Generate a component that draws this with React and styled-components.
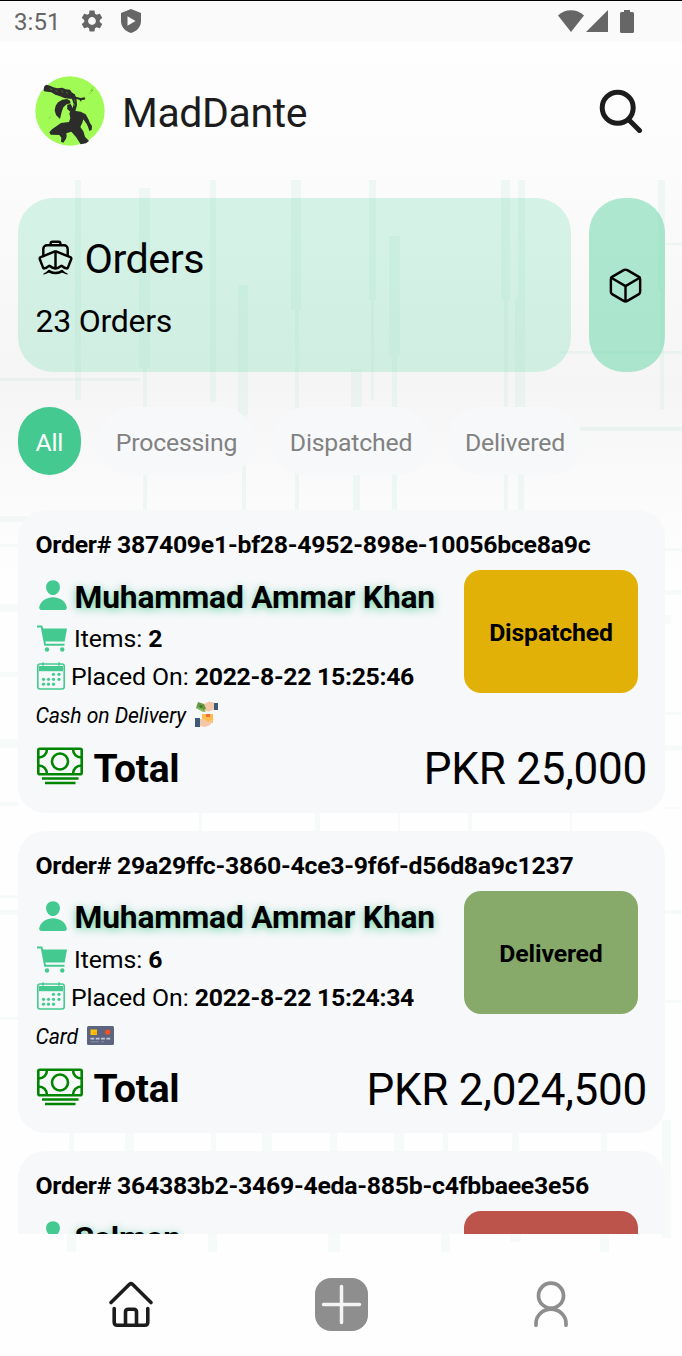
import React from "react";
import styled, { createGlobalStyle } from "styled-components";
import { IoBoatOutline, IoCubeOutline, IoPerson } from "react-icons/io5";
import { MdSettings } from "react-icons/md";

const GlobalStyle = createGlobalStyle`
  * { box-sizing: border-box; }
  body { margin: 0; font-family: Roboto, "Liberation Sans", sans-serif; color: #000; }
  svg { display: block; flex: none; }
`;

const Screen = styled.div`
  position: relative;
  display: flex;
  flex-direction: column;
  width: 682px;
  height: 1356px;
  overflow: hidden;
  background: linear-gradient(#fefefe 42px, #fbfbfb 190px, #f5f5f5 385px, #fafafa 480px, #fefefe 580px);
`;
const Backdrop = styled.svg`
  position: absolute;
  left: 0;
  top: 0;
`;
const StatusBar = styled.div`
  position: relative;
  display: flex;
  align-items: center;
  height: 42px;
  padding: 0 48px 1px 14px;
  border-top: 1px solid #000;
  background: #fafafa;
  color: #666;
`;
const Clock = styled.span`
  width: 65px;
  padding-top: 1px;
  font-size: 24px;
  letter-spacing: 0.1px;
`;
const StatusIcons = styled.div`
  display: flex;
  align-items: center;
  gap: ${(p) => p.$gap}px;
  margin-left: ${(p) => (p.$end ? "auto" : "0")};
`;
const BatterySlot = styled.span`
  padding-left: 10px;
`;
const Header = styled.header`
  position: relative;
  display: flex;
  align-items: center;
  height: 138px;
  padding: 0 39px 0 34.5px;
`;
const UserName = styled.h1`
  flex: 1;
  margin: 3px 0 0 17.5px;
  font-size: 41px;
  font-weight: 400;
  letter-spacing: -0.4px;
  line-height: 48px;
  color: #1c1c1c;
`;
const Summary = styled.section`
  position: relative;
  display: flex;
  gap: 17.5px;
  height: 174px;
  margin: 18px 17px 0 18px;
`;
const OrdersPanel = styled.div`
  flex: 1;
  padding: 32px 17.5px;
  border-radius: 35px;
  background: rgba(66, 211, 152, 0.2);
`;
const PanelTitle = styled.h2`
  display: flex;
  align-items: center;
  gap: 10px;
  height: 58px;
  margin: 0;
  font-size: 41.3px;
  font-weight: 400;
  letter-spacing: -0.5px;

  svg { margin-bottom: 4px; }
`;
const PanelCount = styled.div`
  height: 66px;
  font-size: 32px;
  letter-spacing: -0.25px;
  line-height: 66px;
`;
const ProductsPanel = styled.div`
  display: flex;
  align-items: center;
  justify-content: center;
  width: 76.5px;
  padding-right: 3px;
  border-radius: 35px;
  background: rgba(66, 205, 148, 0.41);
`;
const Filters = styled.nav`
  position: relative;
  display: flex;
  gap: 17.7px;
  height: 68px;
  margin: 35px 0 0 18px;
`;
const Chip = styled.button`
  padding: 3px 17.5px 0;
  border: 0;
  border-radius: 35px;
  background: ${(p) => (p.$active ? "#44c990" : "#f7f8fa")};
  color: ${(p) => (p.$active ? "#fff" : "#818181")};
  font: 400 24.8px Roboto, sans-serif;
  letter-spacing: -0.2px;
`;
const OrderList = styled.main`
  position: relative;
  display: flex;
  flex-direction: column;
  gap: 18.2px;
  height: 724px;
  margin-top: 35px;
  padding: 0 17px 0 18px;
  overflow: hidden;
`;
const Card = styled.article`
  flex: none;
  height: 302.5px;
  padding: 19px 18px 0 17.5px;
  border-radius: 27px;
  background: #f7f8fa;
`;
const OrderId = styled.h3`
  height: 41px;
  margin: 0;
  font-size: 24.8px;
  font-weight: 700;
  letter-spacing: -0.25px;
  line-height: 32px;
  white-space: nowrap;
`;
const CardBody = styled.div`
  display: flex;
  justify-content: space-between;
  height: 130px;
  padding-right: 9px;
`;
const Row = styled.div`
  display: flex;
  align-items: center;
  gap: ${(p) => p.$gap}px;
  height: ${(p) => p.$height}px;
  padding-left: ${(p) => p.$indent || 0}px;
  font-size: 24.8px;
  letter-spacing: -0.05px;
  white-space: nowrap;

  svg { margin-bottom: ${(p) => p.$lift || 0}px; }
  b { letter-spacing: -0.3px; }
`;
const Customer = styled.strong`
  font-size: 31.8px;
  letter-spacing: -0.17px;
  text-shadow: 0 2px 8px rgba(68, 201, 144, 0.8);
`;
const Badge = styled.div`
  display: flex;
  align-items: center;
  justify-content: center;
  width: 174px;
  height: 123px;
  padding-top: 2px;
  border-radius: 17px;
  background: ${(p) => p.$color};
  font-size: 24.8px;
  font-weight: 700;
  letter-spacing: -0.15px;
`;
const Payment = styled.div`
  display: flex;
  align-items: center;
  gap: 9px;
  height: 31px;
  font-size: 21.2px;
  font-style: italic;
  letter-spacing: -0.1px;

  svg { margin-bottom: 2px; }
`;
const TotalRow = styled.div`
  display: flex;
  align-items: center;
  height: 75px;

  svg { margin: 0 0 5px 1px; }
`;
const TotalLabel = styled.strong`
  flex: 1;
  margin-left: 11px;
  font-size: 39px;
  letter-spacing: -0.3px;
`;
const Amount = styled.span`
  padding-top: 1px;
  font-size: 44px;
  letter-spacing: -0.25px;
`;
const TabBar = styled.footer`
  position: relative;
  display: grid;
  grid-template-columns: repeat(3, 210px);
  justify-content: center;
  justify-items: center;
  align-items: center;
  height: 122px;
`;
const Tab = styled.div`
  display: flex;
  align-items: center;
  height: 86px;
  margin-top: 18px;
`;

/* x, y, width, height of every faint stripe behind the content */
const STRIPES = [
  [75, 180, 6, 220], [139, 188, 11, 180], [143, 368, 4, 142], [210, 180, 6, 222],
  [291, 180, 10, 130], [295, 310, 4, 200], [238, 285, 10, 130], [242, 415, 4, 95],
  [369, 180, 7, 120], [371, 300, 3, 100], [389, 236, 11, 120], [392, 356, 5, 154],
  [351, 369, 11, 60], [353, 429, 7, 81], [501, 180, 9, 120], [504, 300, 4, 210],
  [518, 180, 7, 117], [515, 297, 10, 130], [518, 427, 6, 83], [658, 180, 7, 110], [660, 290, 4, 120],
  [0, 378, 140, 3], [560, 351, 122, 3], [580, 427, 102, 4], [665, 243, 17, 2],
  [0, 516, 30, 6], [0, 544, 18, 3], [0, 604, 18, 8], [0, 672, 18, 5], [0, 739, 18, 9], [0, 802, 18, 4],
  [665, 548, 17, 3], [665, 590, 17, 5], [665, 615, 6, 9], [665, 712, 17, 3], [665, 745, 17, 6], [665, 807, 17, 2],
  [199, 812, 3, 19], [315, 812, 5, 19], [398, 812, 2, 19], [468, 812, 4, 19], [570, 812, 2, 19],
  [0, 895, 18, 3], [0, 910, 18, 5], [0, 1017, 18, 3], [665, 910, 17, 4], [665, 1000, 17, 3],
  [69, 1133, 5, 18], [125, 1133, 9, 18], [211, 1133, 5, 18], [262, 1133, 10, 18], [330, 1133, 7, 18],
  [394, 1133, 10, 18], [443, 1133, 5, 18], [512, 1133, 7, 18], [601, 1133, 6, 18], [662, 1120, 9, 118],
  [67, 1234, 9, 18], [208, 1234, 9, 18], [328, 1234, 12, 18], [441, 1234, 9, 18], [510, 1234, 11, 8], [600, 1234, 9, 18],
];

const Stripes = () => (
  <Backdrop width="682" height="1356">
    {STRIPES.map(([x, y, w, h], i) => (
      <rect key={i} x={x} y={y} width={w} height={h} fill="#8fd9bb" opacity={y < 500 ? 0.11 : 0.07} />
    ))}
  </Backdrop>
);

const ShieldIcon = () => (
  <svg width="20" height="24" viewBox="0 0 20 24">
    <path fill="#666" fillRule="evenodd" d="M10 0 20 4v8c0 6-4.500 10.500-10 12C4.500 22.500 0 18 0 12V4zM6.500 7.200v9.600l8-4.800z" />
  </svg>
);
const WifiIcon = () => (
  <svg width="26" height="22" viewBox="0 0 26 22">
    <path fill="#666" d="M13 22 0 5.500C7-1.600 19-1.600 26 5.500z" />
  </svg>
);
const SignalIcon = () => (
  <svg width="22" height="22" viewBox="0 0 22 22">
    <path fill="#666" d="M22 0v22H0z" />
  </svg>
);
const BatteryIcon = () => (
  <svg width="14" height="23" viewBox="0 0 14 23">
    <path fill="#666" d="M4 0h6v2h2.500Q14 2 14 3.500v18Q14 23 12.500 23h-11Q0 23 0 21.500v-18Q0 2 1.500 2H4z" />
  </svg>
);
const Avatar = () => (
  <svg width="70" height="70" viewBox="13 17 210 210">
    <circle cx="118" cy="122" r="104" fill="#a1fb55" />
    <g fill="#2c2c2a">
      <path d="m41 48 6-5 11 3 10 5 12 3 15-2 10 5 13 1 5 8 10 7 2 6 15 4 11-2 3 3-2 4-9 1-2 5-5-6-12-3-18 0-15-2-15-6-12-4-12-7-13-2-9-1-1-6z" />
      <path d="m122 68 10 4 6 18 1 15-6 20-9-4 5-20-6-18z" />
      <path d="m88 146-12-12-4-14 3-14 7-10 13-8 14-2 9 5 2 8-12 3-10 9-5 14z" />
      <path d="m110 103 10-2 5 10 5 10-3 9-11-8-7-7z" />
      <path d="m122 120 28 4 15 8 8 14 5 12 6 9-1 12-7 3-4-13-4-8-10-14-3 10-6 13 9 13 5 16 12 13-9 7-16 3-14-22-14-16-15 5 1 8-2 8-8 12-7-3 1-12-6-8-26-1-4-7 8-9 27-19 24-3 4-12-3-14z" />
    </g>
    <path d="m57 54 7 4m10 2 7 4m11-4 5 7m9-2 6 5m19 18 2 7m0 5-2 7m-19 3-6 7" stroke="#a1fb55" strokeWidth="1.500" opacity=".6" fill="none" />
    <path d="m188 51-8 10 7-2-11 12M60 138l-6 8" stroke="#579536" strokeWidth="1.300" fill="none" />
  </svg>
);
const SearchIcon = () => (
  <svg width="44" height="44" viewBox="0 0 44 44" fill="none" stroke="#1c1c1c" strokeWidth="5" strokeLinecap="round">
    <circle cx="18.700" cy="18.700" r="15.500" />
    <path d="m30 31 10.500 10.500" />
  </svg>
);
const CartIcon = () => (
  <svg width="30" height="27" viewBox="0 0 30 27" fill="#44c990">
    <path d="M0 .5h5.200l1 3H30l-2.300 13H8.200l.8 2.300h18.500v2H7.300L3.800 2.500H0z" />
    <circle cx="10" cy="24.500" r="2.200" />
    <circle cx="25.300" cy="24.500" r="2.200" />
  </svg>
);
const CalendarIcon = () => (
  <svg width="28" height="28" viewBox="0 0 28 28">
    <rect x=".8" y="2" width="26.400" height="25" rx="2.200" fill="none" stroke="#44c990" strokeWidth="1.600" />
    <path d="M2 4h24v5.200H2z" fill="#44c990" />
    <path d="M6 .5v3M22 .5v3" stroke="#44c990" strokeWidth="2" />
    <g fill="#44c990">
      {[[16.5, 12.3], [22, 12.3], [6.5, 17.3], [11.5, 17.3], [16.5, 17.3], [22, 17.3], [6.5, 22.2], [11.5, 22.2], [16.5, 22.2]].map(([x, y]) => (
        <circle key={`${x}-${y}`} cx={x} cy={y} r="1.600" />
      ))}
    </g>
  </svg>
);
const BanknoteIcon = () => (
  <svg width="46" height="38" viewBox="0 0 46 38" fill="none" stroke="#008500" strokeWidth="2.600">
    <rect x="1.300" y="1.800" width="43.400" height="25.500" rx="1.500" />
    <circle cx="23" cy="14.500" r="8" />
    <path d="M10 2c0 5-3.500 8.500-8.500 8.500M36 2c0 5 3.500 8.500 8.500 8.500M10 27c0-5-3.500-8.500-8.500-8.500M36 27c0-5 3.500-8.500 8.500-8.500M5 31.500h36.500M8 36h30.500" />
  </svg>
);
const CashHandIcon = () => (
  <svg width="23" height="27" viewBox="0 0 23 27">
    <path d="m3 1 9 3-2 7-9-4z" fill="#669a42" />
    <path d="m1 7 7 4 3-1-8-4z" fill="#86bd59" />
    <circle cx="6" cy="5.500" r="1.600" fill="#467533" />
    <path d="M9 3 14 .5l5 1v7l-5 2-5-1 2-2z" fill="#f5c6a7" />
    <path d="M19 2h4v7h-4z" fill="#3d5a77" />
    <path d="M7 13h11v9H7z" fill="#ffbd4a" />
    <path d="M11 13h4v3h-4z" fill="#f36b3d" />
    <path d="M5 18h4l4 3 6-3-4 6-5 2-5-1z" fill="#f5c6a7" />
    <path d="M0 17h5v9H0z" fill="#3d5a77" />
  </svg>
);
const CreditCardIcon = () => (
  <svg width="27" height="19" viewBox="0 0 27 19">
    <rect width="27" height="19" rx="1.500" fill="#5c6480" />
    <path d="M3.500 3.500h6.500V9H3.500z" fill="#ffc107" />
    <path d="M6 7h4" stroke="#ff9800" />
    <circle cx="20.700" cy="6" r="2.600" fill="#ff4f1f" />
    <path d="M3.500 12.700h3.800m1.500 0h3.800m1.500 0h3.800m1.500 0h3.800" stroke="#c5c9d3" strokeWidth="1.800" />
    <path d="M3.500 15.800h8.500m2 0h3" stroke="#9aa0b3" strokeWidth=".7" />
  </svg>
);
const HomeIcon = () => (
  <svg width="46" height="48" viewBox="0 0 46 48" fill="none" stroke="#1c1c1c" strokeWidth="3.600" strokeLinecap="round" strokeLinejoin="round">
    <path d="M3 22.500 21.500 4.300Q23 3 24.500 4.300L43 22.500" />
    <path d="M6.200 28.500v13.700q0 3 3 3h27.600q3 0 3-3V28.500" />
    <path d="M17.500 45V32q0-2.800 2.800-2.800h5.400q2.800 0 2.800 2.800v13" />
  </svg>
);
const AddIcon = () => (
  <svg width="53" height="53" viewBox="0 0 53 53">
    <rect width="53" height="53" rx="16" fill="#8e8e8e" />
    <path d="M8.500 26.500h36M26.500 8.500v36" stroke="#f4f4f4" strokeWidth="3.500" strokeLinecap="round" />
  </svg>
);
const ProfileIcon = () => (
  <svg width="36" height="48" viewBox="0 0 36 48" fill="none" stroke="#8e8e8e" strokeWidth="3.700" strokeLinecap="round">
    <circle cx="18" cy="15.700" r="12.500" />
    <path d="M3 45.200v-2a15 14 0 0 1 30 0v2" />
  </svg>
);

const PAYMENT_ICONS = { "Cash on Delivery": CashHandIcon, Card: CreditCardIcon };

const ORDERS = [
  { id: "387409e1-bf28-4952-898e-10056bce8a9c", customer: "Muhammad Ammar Khan", items: 2, date: "2022-8-22 15:25:46", payment: "Cash on Delivery", total: "25,000", status: "Dispatched", color: "#e2b107" },
  { id: "29a29ffc-3860-4ce3-9f6f-d56d8a9c1237", customer: "Muhammad Ammar Khan", items: 6, date: "2022-8-22 15:24:34", payment: "Card", total: "2,024,500", status: "Delivered", color: "#87aa6a" },
  { id: "364383b2-3469-4eda-885b-c4fbbaee3e56", customer: "Salman", color: "#bc544b" },
];

function OrderCard({ order }) {
  const PaymentIcon = PAYMENT_ICONS[order.payment];
  return (
    <Card>
      <OrderId>Order# {order.id}</OrderId>
      <CardBody>
        <div>
          <Row $height={53} $gap={5} $lift={3}>
            <IoPerson size={34} color="#44c990" />
            <Customer>{order.customer}</Customer>
          </Row>
          {order.date && (
            <>
              <Row $height={31} $gap={7} $indent={1.5}>
                <CartIcon />
                <span>Items: <b>{order.items}</b></span>
              </Row>
              <Row $height={45} $gap={6} $indent={1.5} $lift={2}>
                <CalendarIcon />
                <span>Placed On: <b>{order.date}</b></span>
              </Row>
            </>
          )}
        </div>
        <Badge $color={order.color}>{order.status}</Badge>
      </CardBody>
      {order.payment && (
        <>
          <Payment>
            {order.payment}
            <PaymentIcon />
          </Payment>
          <TotalRow>
            <BanknoteIcon />
            <TotalLabel>Total</TotalLabel>
            <Amount>PKR {order.total}</Amount>
          </TotalRow>
        </>
      )}
    </Card>
  );
}

export default function App() {
  return (
    <Screen>
      <GlobalStyle />
      <Stripes />
      <StatusBar>
        <Clock>3:51</Clock>
        <StatusIcons $gap={16}>
          <MdSettings size={26} />
          <ShieldIcon />
        </StatusIcons>
        <StatusIcons $gap={2} $end>
          <WifiIcon />
          <SignalIcon />
          <BatterySlot>
            <BatteryIcon />
          </BatterySlot>
        </StatusIcons>
      </StatusBar>
      <Header>
        <Avatar />
        <UserName>MadDante</UserName>
        <SearchIcon />
      </Header>
      <Summary>
        <OrdersPanel>
          <PanelTitle>
            <IoBoatOutline size={39} />
            Orders
          </PanelTitle>
          <PanelCount>23 Orders</PanelCount>
        </OrdersPanel>
        <ProductsPanel>
          <IoCubeOutline size={39} />
        </ProductsPanel>
      </Summary>
      <Filters>
        {["All", "Processing", "Dispatched", "Delivered"].map((label, i) => (
          <Chip key={label} $active={i === 0}>{label}</Chip>
        ))}
      </Filters>
      <OrderList>
        {ORDERS.map((order) => (
          <OrderCard key={order.id} order={order} />
        ))}
      </OrderList>
      <TabBar>
        <Tab><HomeIcon /></Tab>
        <Tab><AddIcon /></Tab>
        <Tab><ProfileIcon /></Tab>
      </TabBar>
    </Screen>
  );
}
